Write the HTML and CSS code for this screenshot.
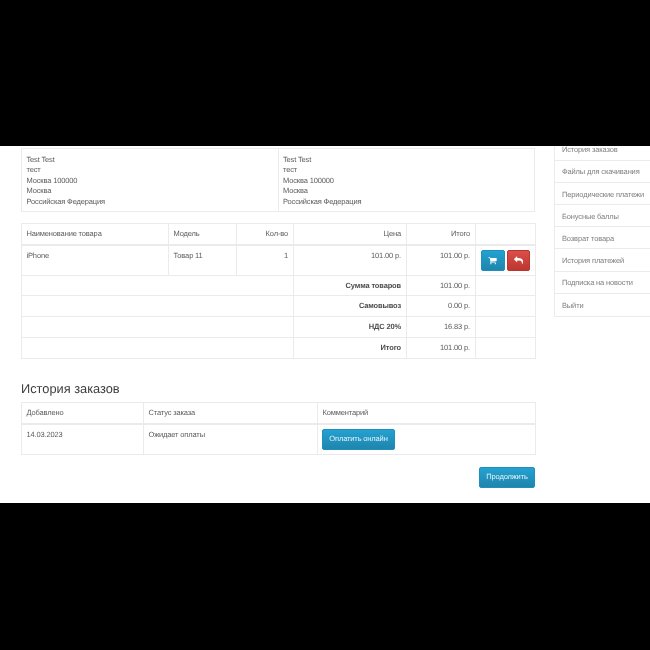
FILE: index.html
```html
<!DOCTYPE html>
<html lang="ru">
<head>
<meta charset="utf-8">
<title>Заказ</title>
<link rel="stylesheet" href="styles.css">
</head>
<body>
<div class="bar bar-top"></div>
<main class="main">
  <section class="content">
    <table class="tbl address">
      <tr>
        <td class="half">Test Test<br>тест<br>Москва 100000<br>Москва<br>Российская Федерация</td>
        <td class="half">Test Test<br>тест<br>Москва 100000<br>Москва<br>Российская Федерация</td>
      </tr>
    </table>
    <table class="tbl items">
      <colgroup>
        <col class="c-name"><col class="c-model"><col class="c-qty"><col class="c-price"><col class="c-total"><col class="c-act">
      </colgroup>
      <thead>
        <tr><th>Наименование товара</th><th>Модель</th><th class="r">Кол-во</th><th class="r">Цена</th><th class="r">Итого</th><th></th></tr>
      </thead>
      <tbody>
        <tr class="item-row">
          <td>iPhone</td><td>Товар 11</td><td class="r">1</td><td class="r">101.00 р.</td><td class="r">101.00 р.</td>
          <td class="actions">
            <span class="icon-btn blue"><svg class="ico" viewBox="0 0 1792 1792"><path fill="#fff" d="M704 1536q0 52-38 90t-90 38-90-38-38-90 38-90 90-38 90 38 38 90zm896 0q0 52-38 90t-90 38-90-38-38-90 38-90 90-38 90 38 38 90zm128-1088v512q0 24-16.5 42.5t-40.5 21.5l-1044 122q13 60 13 70 0 16-24 64h920q26 0 45 19t19 45-19 45-45 19h-1024q-26 0-45-19t-19-45q0-11 8-31.5t16-36 21.5-40 15.5-29.5l-177-823h-204q-26 0-45-19t-19-45 19-45 45-19h256q16 0 28.5 6.5t19.5 15.5 13 24.5 8 26 5.5 29.5 4.5 26h1201q26 0 45 19t19 45z"/></svg></span>
            <span class="icon-btn red"><svg class="ico" viewBox="0 0 1792 1792"><path fill="#fff" d="M1792 1120q0 166-127 451-3 7-10.5 24t-13.5 30-13 22q-12 17-28 17-15 0-23.5-10t-8.5-25q0-9 2.5-26.5t2.5-23.5q5-68 5-123 0-101-17.5-181t-48.5-138.5-80-101-105.5-69.5-133-42.5-154-21.5-175.5-6h-224v256q0 26-19 45t-45 19-45-19l-512-512q-19-19-19-45t19-45l512-512q19-19 45-19t45 19 19 45v256h224q713 0 875 403 53 134 53 333z"/></svg></span>
          </td>
        </tr>
        <tr class="sum-row"><td colspan="3"></td><td class="r"><b>Сумма товаров</b></td><td class="r">101.00 р.</td><td></td></tr>
        <tr class="sum-row"><td colspan="3"></td><td class="r"><b>Самовывоз</b></td><td class="r">0.00 р.</td><td></td></tr>
        <tr class="sum-row"><td colspan="3"></td><td class="r"><b>НДС 20%</b></td><td class="r">16.83 р.</td><td></td></tr>
        <tr class="sum-row"><td colspan="3"></td><td class="r"><b>Итого</b></td><td class="r">101.00 р.</td><td></td></tr>
      </tbody>
    </table>
    <h2 class="heading">История заказов</h2>
    <table class="tbl history">
      <colgroup><col class="h-date"><col class="h-status"><col class="h-comment"></colgroup>
      <thead><tr><th>Добавлено</th><th>Статус заказа</th><th>Комментарий</th></tr></thead>
      <tbody>
        <tr class="item-row"><td>14.03.2023</td><td>Ожидает оплаты</td><td class="pay"><span class="btn blue btn-pay">Оплатить онлайн</span></td></tr>
      </tbody>
    </table>
    <div class="buttons"><span class="btn blue btn-next">Продолжить</span></div>
  </section>
  <aside class="side">
    <a class="side-link first">История заказов</a>
    <a class="side-link">Файлы для скачивания</a>
    <a class="side-link">Периодические платежи</a>
    <a class="side-link">Бонусные баллы</a>
    <a class="side-link">Возврат товара</a>
    <a class="side-link">История платежей</a>
    <a class="side-link">Подписка на новости</a>
    <a class="side-link">Выйти</a>
  </aside>
</main>
<div class="bar bar-bottom"></div>
</body>
</html>
```
FILE: styles.css
```css
* { box-sizing: border-box; }
html, body { margin: 0; padding: 0; }
body {
  width: 650px;
  height: 650px;
  overflow: hidden;
  background: #fff;
  font-family: "Liberation Sans", Arial, sans-serif;
  font-size: 7.5px;
  letter-spacing: -0.15px;
  line-height: 10.4px;
  color: #5c5c5c;
  text-rendering: geometricPrecision;
}
.bar { background: #000; }
.bar-top { height: 146px; }
.bar-bottom { height: 147px; }
.main {
  height: 357px;
  overflow: hidden;
  display: flex;
  align-items: flex-start;
  padding-left: 21px;
  gap: 19px;
  filter: blur(0.3px);
}
.content { width: 514px; flex: none; padding-top: 2px; }
.tbl {
  width: 100%;
  table-layout: fixed;
  border-collapse: collapse;
}
.tbl td, .tbl th {
  border: 1px solid #ebebeb;
  padding: 5px 5px 5px 4.5px;
  vertical-align: top;
  font-weight: normal;
  text-align: left;
}
.tbl thead th {
  height: 21px;
  border-bottom: 2px solid #ebebeb;
  vertical-align: middle;
  padding: 0 5px 0 4.5px;
}
.tbl .r { text-align: right; }
.tbl b { font-weight: bold; color: #4c4c4c; }
.address { margin-bottom: 11px; }
.address td { height: 63px; padding-top: 6px; padding-bottom: 4px; }
.half { width: 50%; }
.c-name { width: 147px; }
.c-model { width: 68px; }
.c-qty { width: 57px; }
.c-price { width: 113px; }
.c-total { width: 69px; }
.c-act { width: 60px; }
.item-row td { height: 30px; padding-top: 5px; }
.sum-row td { height: 20.75px; padding: 1px 5px 0; vertical-align: middle; }
.tbl .actions { padding: 4px 4px 4px 5px; white-space: nowrap; font-size: 0; line-height: 0; }
.icon-btn {
  display: inline-flex;
  align-items: center;
  justify-content: center;
  width: 23.5px;
  height: 21px;
  border-radius: 2px;
  margin-right: 2px;
}
.ico { width: 9px; height: 9px; display: block; }
.blue {
  background: linear-gradient(#23a1d1, #1f85ad);
  border: 1px solid #1f90bb;
}
.red {
  background: linear-gradient(#da4f49, #bd362f);
  border: 1px solid #b8362f;
}
.heading {
  margin: 21px 0 5.5px;
  font-size: 12.8px;
  letter-spacing: 0;
  line-height: 17px;
  font-weight: normal;
  color: #3c3c3c;
}
.h-date { width: 122px; }
.h-status { width: 174px; }
.h-comment { width: 218px; }
.tbl .pay { padding: 4px 4px; }
.btn {
  display: inline-flex;
  align-items: center;
  justify-content: center;
  height: 21px;
  border-radius: 2px;
  color: #e6f3f8;
}
.btn-pay { width: 73px; }
.btn-next { width: 56px; }
.buttons { display: flex; justify-content: flex-end; margin-top: 12.5px; }
.side { width: 110px; flex: none; margin-top: -8px; border: 1px solid #ebebeb; }
.side-link {
  display: flex;
  align-items: center;
  height: 22.1px;
  padding: 2px 0 0 7px;
  border-bottom: 1px solid #ebebeb;
  color: #808080;
}
.side-link:last-child { border-bottom: 0; }
```
